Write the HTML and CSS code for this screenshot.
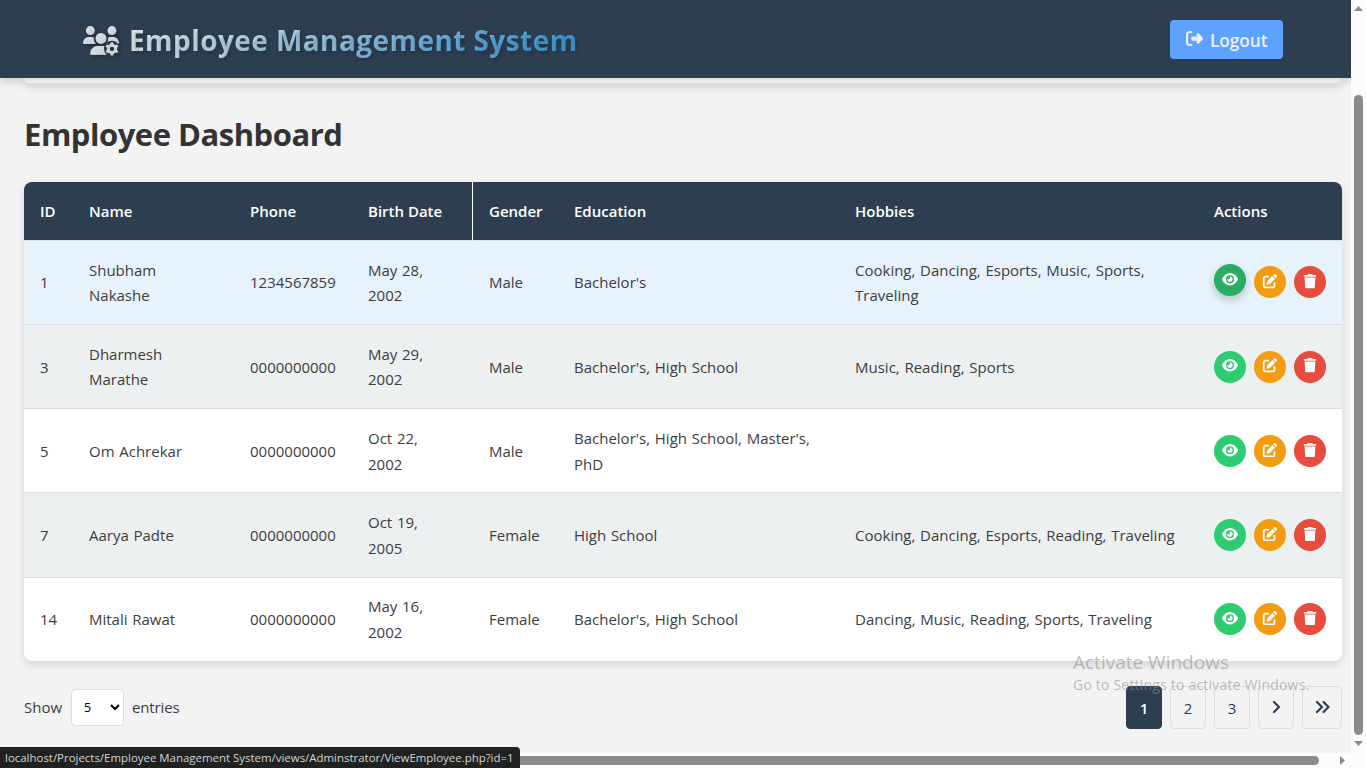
FILE: index.html
```html
<!DOCTYPE html>
<html lang="en">
<head>
<meta charset="utf-8">
<title>Employee Management System</title>
<link rel="stylesheet" href="styles.css">
</head>
<body>
<svg class="sprite" xmlns="http://www.w3.org/2000/svg">
  <symbol id="eye" viewBox="0 0 576 512"><path d="M288 32c-80.800 0-145.500 36.800-192.600 80.600C48.600 156 17.300 208 2.500 243.700c-3.300 7.900-3.300 16.700 0 24.600C17.300 304 48.600 356 95.400 399.400C142.500 443.200 207.200 480 288 480s145.500-36.800 192.600-80.600c46.800-43.500 78.100-95.400 93-131.100c3.300-7.900 3.300-16.700 0-24.600c-14.900-35.700-46.200-87.700-93-131.100C433.500 68.800 368.800 32 288 32zM144 256a144 144 0 1 1 288 0 144 144 0 1 1 -288 0zm144-64c0 35.300-28.700 64-64 64c-7.100 0-13.900-1.200-20.300-3.300c-5.500-1.800-11.900 1.600-11.700 7.400c.3 6.900 1.300 13.800 3.200 20.700c13.700 51.200 66.400 81.600 117.600 67.900s81.600-66.400 67.900-117.600c-11.100-41.500-47.800-69.400-88.600-71.100c-5.800-.2-9.200 6.100-7.400 11.700c2.100 6.400 3.300 13.200 3.300 20.300z"/></symbol>
  <symbol id="edit" viewBox="0 0 512 512"><path d="M471.600 21.700c-21.900-21.900-57.300-21.900-79.200 0L362.300 51.700l97.900 97.900 30.100-30.100c21.900-21.900 21.900-57.300 0-79.200L471.600 21.700zm-299.200 220c-6.100 6.100-10.800 13.600-13.500 21.900l-29.600 88.800c-2.900 8.600-.6 18.100 5.800 24.600s15.900 8.700 24.600 5.800l88.800-29.600c8.200-2.700 15.700-7.400 21.900-13.500L437.700 172.300 339.700 74.300 172.400 241.700zM96 64C43 64 0 107 0 160V416c0 53 43 96 96 96H352c53 0 96-43 96-96V320c0-17.700-14.300-32-32-32s-32 14.300-32 32v96c0 17.700-14.300 32-32 32H96c-17.700 0-32-14.300-32-32V160c0-17.700 14.300-32 32-32h96c17.700 0 32-14.300 32-32s-14.300-32-32-32H96z"/></symbol>
  <symbol id="trash" viewBox="0 0 448 512"><path d="M135.200 17.700L128 32H32C14.300 32 0 46.300 0 64S14.300 96 32 96H416c17.700 0 32-14.300 32-32s-14.300-32-32-32H320l-7.200-14.300C307.400 6.800 296.300 0 284.200 0H163.800c-12.100 0-23.200 6.800-28.600 17.700zM416 128H32L53.200 467c1.600 25.300 22.600 45 47.900 45H346.900c25.300 0 46.300-19.700 47.900-45L416 128z"/></symbol>
</svg>
<div class="window">
  <div class="viewport">
    <header class="topbar">
      <h1 class="brand">
        <svg class="brand-icon" viewBox="0 0 640 512">
          <defs>
            <linearGradient id="bg" x1="0" y1="0" x2="1" y2="1"><stop offset="0" stop-color="#dde2e4"/><stop offset="1" stop-color="#c4cdd1"/></linearGradient>
            <mask id="cut"><rect width="640" height="512" fill="#fff"/><circle cx="515" cy="404" r="142" fill="#000"/></mask>
          </defs>
          <g fill="url(#bg)">
            <circle cx="131" cy="80" r="80"/><circle cx="515" cy="80" r="80"/><circle cx="320" cy="219" r="97"/>
            <path d="M0 298.700C0 310.400 9.600 320 21.300 320H234.700c-26-23.500-43-57.800-43-96c0-7.600.7-15 1.900-22.300c-13.600-6.300-28.700-9.700-44.600-9.700H106.700C47.800 192 0 239.800 0 298.700z"/>
            <path mask="url(#cut)" d="M405.300 320H618.700c11.700 0 21.300-9.600 21.300-21.300C640 239.800 592.200 192 533.300 192H490.700c-15.900 0-31 3.500-44.600 9.700c1.300 7.200 1.900 14.700 1.900 22.300c0 38.200-16.800 72.500-43.300 96z"/>
            <path mask="url(#cut)" d="M261.300 352C187.700 352 128 411.700 128 485.300c0 14.700 11.900 26.700 26.700 26.700H485.300c14.800 0 26.700-12 26.700-26.700C512 411.700 452.300 352 378.700 352z"/>
          </g>
          <g stroke="#ccd5d8" fill="none">
            <circle cx="515" cy="404" r="66" stroke-width="54"/>
            <path stroke-width="50" d="M515 286v54M515 468v54M413 345l46 27M571 436l46 27M413 463l46-27M571 372l46-27"/>
          </g>
        </svg>
        <span class="brand-text">Employee Management System</span>
      </h1>
      <a class="logout"><svg class="logout-icon" viewBox="0 0 512 512"><path d="M377.900 105.900L500.700 228.700c7.200 7.200 11.300 17.100 11.300 27.300s-4.100 20.100-11.300 27.300L377.900 406.100c-6.400 6.400-15 9.900-24 9.900c-18.700 0-33.900-15.200-33.900-33.900l0-62.100-128 0c-17.700 0-32-14.300-32-32l0-64c0-17.700 14.300-32 32-32l128 0 0-62.100c0-18.700 15.200-33.900 33.900-33.900c9 0 17.600 3.600 24 9.900zM160 96L96 96c-17.700 0-32 14.300-32 32l0 256c0 17.700 14.300 32 32 32l64 0c17.700 0 32 14.300 32 32s-14.300 32-32 32l-64 0c-53 0-96-43-96-96L0 128C0 75 43 32 96 32l64 0c17.700 0 32 14.300 32 32s-14.300 32-32 32z"/></svg><span>Logout</span></a>
    </header>
    <main class="content">
      <div class="filter-card"></div>
      <h2 class="title">Employee Dashboard</h2>
      <table class="employees">
        <colgroup><col class="c-id"><col class="c-name"><col class="c-phone"><col class="c-birth"><col class="c-gender"><col class="c-edu"><col class="c-hobbies"><col class="c-actions"></colgroup>
        <thead><tr><th>ID</th><th>Name</th><th>Phone</th><th class="divided">Birth Date</th><th>Gender</th><th>Education</th><th>Hobbies</th><th>Actions</th></tr></thead>
        <tbody>
          <tr class="hovered"><td>1</td><td>Shubham<br>Nakashe</td><td>1234567859</td><td>May 28,<br>2002</td><td>Male</td><td>Bachelor's</td><td>Cooking, Dancing, Esports, Music, Sports,<br>Traveling</td><td class="cell-actions"><div class="actions"><a class="act view raised"><svg><use href="#eye"/></svg></a><a class="act edit"><svg><use href="#edit"/></svg></a><a class="act delete"><svg><use href="#trash"/></svg></a></div></td></tr>
          <tr><td>3</td><td>Dharmesh<br>Marathe</td><td>0000000000</td><td>May 29,<br>2002</td><td>Male</td><td>Bachelor's, High School</td><td>Music, Reading, Sports</td><td class="cell-actions"><div class="actions"><a class="act view"><svg><use href="#eye"/></svg></a><a class="act edit"><svg><use href="#edit"/></svg></a><a class="act delete"><svg><use href="#trash"/></svg></a></div></td></tr>
          <tr><td>5</td><td>Om Achrekar</td><td>0000000000</td><td>Oct 22,<br>2002</td><td>Male</td><td>Bachelor's, High School, Master's,<br>PhD</td><td></td><td class="cell-actions"><div class="actions"><a class="act view"><svg><use href="#eye"/></svg></a><a class="act edit"><svg><use href="#edit"/></svg></a><a class="act delete"><svg><use href="#trash"/></svg></a></div></td></tr>
          <tr><td>7</td><td>Aarya Padte</td><td>0000000000</td><td>Oct 19,<br>2005</td><td>Female</td><td>High School</td><td>Cooking, Dancing, Esports, Reading, Traveling</td><td class="cell-actions"><div class="actions"><a class="act view"><svg><use href="#eye"/></svg></a><a class="act edit"><svg><use href="#edit"/></svg></a><a class="act delete"><svg><use href="#trash"/></svg></a></div></td></tr>
          <tr><td>14</td><td>Mitali Rawat</td><td>0000000000</td><td>May 16,<br>2002</td><td>Female</td><td>Bachelor's, High School</td><td>Dancing, Music, Reading, Sports, Traveling</td><td class="cell-actions"><div class="actions"><a class="act view"><svg><use href="#eye"/></svg></a><a class="act edit"><svg><use href="#edit"/></svg></a><a class="act delete"><svg><use href="#trash"/></svg></a></div></td></tr>
        </tbody>
      </table>
      <div class="footer">
        <div class="length"><span class="show">Show</span><select class="length-select"><option>5</option></select><span class="entries">entries</span></div>
        <nav class="pages">
          <a class="page current">1</a><a class="page">2</a><a class="page">3</a>
          <a class="page"><svg class="chev" viewBox="0 0 10 14"><path d="M2 2l5 5-5 5"/></svg></a>
          <a class="page last"><svg class="chevs" viewBox="0 0 16 14"><path d="M2 2l5 5-5 5M8.500 2l5 5-5 5"/></svg></a>
        </nav>
      </div>
    </main>
  </div>
  <div class="vbar"><svg class="arrow" viewBox="0 0 9 5"><path d="M0 5L4.500 0 9 5z"/></svg><div class="vthumb"></div><svg class="arrow" viewBox="0 0 9 5"><path d="M0 0h9L4.500 5z"/></svg></div>
  <div class="hbar"><div class="hthumb"></div><svg class="arrow-right" viewBox="0 0 5 9"><path d="M0 0l5 4.500L0 9z"/></svg></div>
  <div class="corner"></div>
</div>
<div class="watermark"><div class="wm-title">Activate Windows</div><div class="wm-text">Go to Settings to activate Windows.</div></div>
<div class="status">localhost/Projects/Employee Management System/views/Adminstrator/ViewEmployee.php?id=1</div>
</body>
</html>
```
FILE: styles.css
```css
* { box-sizing: border-box; }
body { margin: 0; width: 1366px; height: 768px; overflow: hidden; position: relative; background: #f3f3f3; color: #3d3d3d; font-family: "Open Sans", "Noto Sans", sans-serif; font-size: 15px; line-height: 25.6px; }
.sprite { display: none; }
.window { display: grid; grid-template-columns: 1351px 15px; grid-template-rows: 753px 15px; height: 768px; }
.viewport { overflow: hidden; background: #f3f3f3; }

.topbar { position: relative; z-index: 2; height: 78px; padding: 2px 68px 0 83px; display: flex; align-items: center; justify-content: space-between; background: #2c3e50; box-shadow: 0 2px 10px rgba(0,0,0,.2); }
.brand { margin: 0; display: flex; align-items: center; gap: 10px; font-size: 28px; line-height: 44px; font-weight: 700; }
.brand-icon { width: 36px; height: 29px; overflow: visible; filter: drop-shadow(2px 2px 2px rgba(0,0,0,.3)); }
.brand-text { width: 452px; white-space: nowrap; letter-spacing: .43px; background: linear-gradient(135deg, #ecf0f1, #3498db); -webkit-background-clip: text; background-clip: text; color: transparent; text-shadow: 2px 2px 4px rgba(0,0,0,.2); }
.logout { display: flex; align-items: center; gap: 7px; width: 113px; height: 39px; margin-top: -2px; padding: 3px 0 0 16px; border-radius: 4px; background: #5ea2ff; color: #ecf0f1; font-size: 17.200px; font-weight: 600; }
.logout-icon { width: 17px; height: 17px; margin-top: -4px; fill: #ecf0f1; }

.content { padding: 0 9px 0 24px; }
.filter-card { height: 5px; background: #fff; border-radius: 0 0 8px 8px; box-shadow: 0 4px 8px rgba(0,0,0,.15); }
.title { margin: 29px 0 26px; height: 44px; font-size: 31px; line-height: 44px; font-weight: 700; letter-spacing: -.48px; color: #333; }

.employees { width: 1318px; table-layout: fixed; border-collapse: separate; border-spacing: 0; background: #fff; border-radius: 8px; overflow: hidden; box-shadow: 0 4px 8px rgba(0,0,0,.12); }
.c-id { width: 49px; }
.c-name { width: 161px; }
.c-phone { width: 118px; }
.c-birth { width: 121px; }
.c-gender { width: 85px; }
.c-edu { width: 281px; }
.c-hobbies { width: 359px; }
.c-actions { width: 144px; }
.employees th, .employees td { padding: 1.600px 16px 0; text-align: left; vertical-align: middle; border-bottom: 1px solid #ddd; white-space: nowrap; }
.employees th { height: 58.800px; background: #2c3e50; color: #fff; font-weight: 600; }
.employees th.divided { border-right: 1px solid #fff; }
.employees td { height: 84.200px; word-spacing: .8px; }
.employees td.cell-actions { padding-top: 0; }
.employees tbody tr:nth-child(even) { background: #ecf0f1; }
.employees tbody tr.hovered { background: #e6f3fc; }
.employees tbody tr:last-child td { height: 83.600px; border-bottom-color: transparent; }
.actions { display: flex; gap: 8px; }
.act { width: 32px; height: 32px; border-radius: 50%; display: flex; align-items: center; justify-content: center; padding-bottom: 2px; }
.act svg { width: 16px; height: 14.400px; fill: #fff; }
.view { background: #2ecc71; }
.raised { background: #27ae60; margin-top: -2px; margin-bottom: 2px; box-shadow: 0 4px 8px rgba(0,0,0,.2); }
.edit { background: #f39c12; }
.delete { background: #e74c3c; }

.footer { display: flex; justify-content: space-between; align-items: center; margin-top: 24.800px; height: 43px; }
.length { display: flex; align-items: center; gap: 8px; }
.show { width: 39px; padding-top: 1px; }
.entries { padding-top: 1px; letter-spacing: -.15px; }
.length-select { width: 53px; height: 37px; padding: 0 0 0 8px; border: 1px solid #ddd; border-radius: 4px; background: #fff; color: #000; font: 12.500px "Open Sans", sans-serif; }
.pages { display: flex; gap: 8px; }
.page { width: 36px; height: 43px; display: flex; align-items: center; justify-content: center; border: 1px solid #ddd; border-radius: 4px; color: #2c3e50; padding-top: 2px; }
.page.last { width: 40px; }
.page.current { background: #2c3e50; border-color: #2c3e50; color: #fff; font-weight: 600; }
.chev, .chevs { height: 14px; margin-top: -2px; fill: none; stroke: #2c3e50; stroke-width: 2.200; stroke-linecap: round; stroke-linejoin: round; }
.chev { width: 10px; margin-left: 1px; }
.chevs { width: 16px; margin-left: 1px; }

.vbar { background: #fcfcfc; display: flex; flex-direction: column; align-items: center; padding-top: 6px; }
.arrow { width: 9px; height: 5px; fill: #8b8b8b; }
.vthumb { width: 9px; height: 640px; margin: 84px 0 6px; border-radius: 5px; background: #8b8b8b; }
.hbar { background: #fcfcfc; display: flex; align-items: center; padding-left: 15px; gap: 21px; }
.hthumb { width: 1304px; height: 9px; border-radius: 5px; background: #8b8b8b; }
.arrow-right { width: 5px; height: 9px; fill: #8b8b8b; }
.corner { background: #fcfcfc; }

.watermark { position: absolute; left: 1073px; top: 649px; color: rgba(145,145,145,.6); white-space: nowrap; }
.wm-title { font-size: 19px; line-height: 26px; }
.wm-text { font-size: 14px; line-height: 20px; letter-spacing: .2px; }
.status { position: absolute; left: 0; bottom: 0; width: 520px; height: 21px; padding-left: 5px; background: #202221; color: #d4d4d4; border-radius: 0 4px 0 0; font-size: 11.450px; line-height: 21px; white-space: nowrap; }
```
